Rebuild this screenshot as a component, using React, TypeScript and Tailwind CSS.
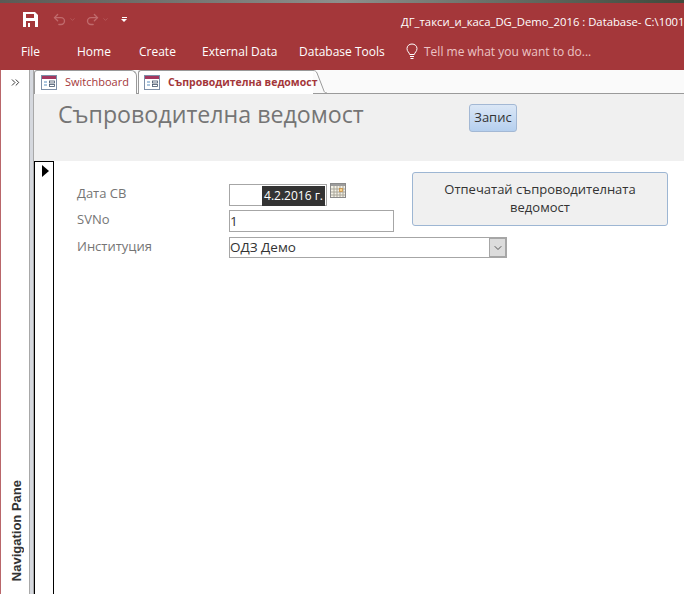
import { ChevronDown, ChevronsRight, Redo2, Undo2 } from 'lucide-react';

const font = { fontFamily: '"Open Sans", "Noto Sans", sans-serif' };

function SaveIcon() {
  return (
    <svg width="15" height="15" viewBox="0 0 15 15" className="block shrink-0">
      <path d="M0 0h12l3 3v12H0z" fill="#fff" />
      <rect x="3" y="2" width="8" height="4" fill="#a4373a" />
      <rect x="3" y="9" width="9" height="6" fill="#a4373a" />
      <rect x="5" y="11" width="2" height="4" fill="#fff" />
    </svg>
  );
}

function FormIcon() {
  return (
    <svg width="16" height="15" viewBox="0 0 16 15" className="block shrink-0">
      <rect x="0.5" y="0.5" width="15" height="14" fill="#fff" stroke="#7d8fa8" />
      <rect x="1" y="1" width="14" height="3" fill="#a4375f" />
      <path d="M3 7h3M3 10h3" stroke="#5a8fc0" strokeWidth="1" />
      <rect x="8.5" y="6" width="5" height="2" fill="#fff" stroke="#44546a" strokeWidth="0.8" />
      <rect x="8.5" y="9.5" width="5" height="2" fill="#fff" stroke="#44546a" strokeWidth="0.8" />
    </svg>
  );
}

function CalendarIcon() {
  return (
    <svg width="16" height="15" viewBox="0 0 16 15" className="block">
      <rect x="0.5" y="0.5" width="15" height="14" fill="#f4f1e6" stroke="#8a8a8a" />
      <rect x="1" y="1" width="14" height="2" fill="#9c9c9c" />
      <path d="M4 3v11M7 3v11M10 3v11M13 3v11M1 6h14M1 9h14M1 12h14" stroke="#a9a69a" strokeWidth="1" />
      <rect x="9.5" y="5.5" width="3" height="3" fill="#f7d38c" stroke="#c98b3a" strokeWidth="0.7" />
    </svg>
  );
}

function BulbIcon() {
  return (
    <svg width="12" height="17" viewBox="0 0 12 17" fill="none" stroke="#fff" strokeWidth="1" className="block shrink-0">
      <path d="M3.7 11.5C3.4 9.5 1 8.6 1 5.6 1 2.9 3.2 1 6 1s5 1.9 5 4.6c0 3-2.4 3.9-2.7 5.9z" />
      <path d="M4 13.5h4M4.5 15.5h3" />
    </svg>
  );
}

function TabEdge() {
  return (
    <svg width="14" height="24" viewBox="0 0 14 24" fill="none" className="block shrink-0">
      <path d="M0 0.5c2 0 3 .6 4 2.5l7 18c.4 1 1 2 3 2" fill="#fff" />
      <path d="M0 0.5c2 0 3 .6 4 2.5l7 18c.4 1 1 2 3 2" stroke="#9a9a9a" />
    </svg>
  );
}

export default function App() {
  return (
    <div className="w-[684px] h-[594px] overflow-hidden flex flex-col bg-white" style={font}>
      <div className="h-[3px] shrink-0 bg-gradient-to-r from-[#5b5a55] via-[#8d8f8c] to-[#3f4a3c]" />

      <div className="h-[67px] shrink-0 bg-[#a4373a] text-white flex flex-col">
        <div className="h-[32px] flex items-center pl-[23px] pr-0">
          <SaveIcon />
          <div className="flex items-center shrink-0 ml-[14px] text-[#c06a6c]">
            <Undo2 size={15} strokeWidth={2.2} className="shrink-0" />
            <ChevronDown size={7} className="ml-[2px] shrink-0" />
            <Redo2 size={15} strokeWidth={2.2} className="ml-[9px] shrink-0" />
            <ChevronDown size={7} className="ml-[2px] shrink-0" />
          </div>
          <div className="ml-[12px] shrink-0 flex flex-col items-center gap-[1px]">
            <div className="w-[5px] h-[1px] bg-white" />
            <div className="w-0 h-0 border-l-[3px] border-r-[3px] border-t-[3px] border-l-transparent border-r-transparent border-t-white" />
          </div>
          <div className="ml-[274px] mt-[6px] shrink-0 text-[11.3px] whitespace-nowrap leading-none">
            ДГ_такси_и_каса_DG_Demo_2016 : Database- C:\1001s
          </div>
        </div>
        <div className="h-[30px] flex items-center text-[12px] whitespace-nowrap pt-[3px]">
          <span className="ml-[21px] w-[56px]">File</span>
          <span className="w-[62px]">Home</span>
          <span className="w-[63px]">Create</span>
          <span className="w-[97px]">External Data</span>
          <span className="w-[107px]">Database Tools</span>
          <BulbIcon />
          <span className="ml-[6px] text-[#ecc4c5]">Tell me what you want to do...</span>
        </div>
      </div>

      <div className="flex-1 flex min-h-0">
        <div className="w-[29px] shrink-0 border-l border-l-[#b9666a] flex flex-col items-center justify-between bg-white pb-[13px]">
          <ChevronsRight size={13} strokeWidth={1.8} className="mt-[6px] text-[#333]" />
          <span
            className="ml-[2px] font-bold text-[13px] text-[#333] whitespace-nowrap leading-none"
            style={{ writingMode: 'vertical-rl', transform: 'rotate(180deg)', fontFamily: '"Liberation Sans", sans-serif' }}
          >
            Navigation Pane
          </span>
        </div>
        <div className="w-[5px] shrink-0 bg-[#d5d8de] border-x border-[#a8a8a8]" />

        <div className="flex-1 min-w-0 flex flex-col">
          <div className="h-[24px] shrink-0 flex items-end bg-[#fafafa] border-b border-[#9a9a9a]">
            <div className="h-[24px] -mb-px w-[103px] flex items-center gap-[8px] pl-[6px] border-l border-t border-r border-[#9a9a9a] rounded-tl-[3px] rounded-tr-[6px] bg-white">
              <FormIcon />
              <span className="text-[11px] text-[#a4373a]">Switchboard</span>
            </div>
            <div className="h-[24px] -mb-px flex ml-[1px] relative">
              <div className="w-[175px] flex items-center gap-[8px] pl-[5px] border-l border-t border-[#9a9a9a] rounded-tl-[3px] bg-white">
                <FormIcon />
                <span className="text-[10.5px] font-bold text-[#a4373a] whitespace-nowrap">Съпроводителна ведомост</span>
              </div>
              <TabEdge />
            </div>
          </div>

          <div className="h-[67px] shrink-0 bg-[#f0f0f0] flex items-start">
            <h1 className="ml-[24px] mt-[5px] text-[23.2px] leading-[30px] font-normal text-[#757575] whitespace-nowrap w-[411px]">
              Съпроводителна ведомост
            </h1>
            <button className="mt-[10px] w-[48px] h-[28px] border border-[#a3b8d4] rounded-[3px] bg-gradient-to-b from-[#dbe7f6] to-[#b5cfee] text-[13px] text-[#333]">
              Запис
            </button>
          </div>

          <div className="flex-1 min-h-0 flex">
            <div className="w-[20px] shrink-0 border-l border-t border-r border-black pl-[7px] pt-[3px]">
              <div className="w-0 h-0 border-t-[6px] border-b-[6px] border-l-[7px] border-t-transparent border-b-transparent border-l-black" />
            </div>
            <div className="flex-1 min-w-0 pl-[23px] pt-[11px] text-[13px]">
              <div className="flex h-[60px]">
                <div className="w-[335px] pt-[12px] flex flex-col gap-[4px]">
                  <div className="flex h-[22px]">
                    <label className="w-[152px] text-[#757575] leading-[19px]">Дата СВ</label>
                    <div className="w-[98px] h-[22px] border border-[#a6a6a6] p-px flex justify-end">
                      <span className="h-[20px] bg-[#333] text-white text-[12px] leading-[20px] px-[2px] whitespace-nowrap">4.2.2016 г.</span>
                    </div>
                    <div className="ml-[3px] -mt-px">
                      <CalendarIcon />
                    </div>
                  </div>
                  <div className="flex h-[22px]">
                    <label className="w-[152px] text-[#757575] leading-[19px]">SVNo</label>
                    <div className="w-[165px] h-[22px] border border-[#a6a6a6] text-[#333] text-[13.5px] leading-[21px]">1</div>
                  </div>
                </div>
                <button className="w-[256px] h-[54px] border border-[#9db6d3] rounded-[3px] bg-[#f0f0f0] text-[13px] leading-[18px] text-[#333] px-[20px] pb-[2px]">
                  Отпечатай съпроводителната ведомост
                </button>
              </div>
              <div className="flex mt-[5px]">
                <label className="w-[152px] text-[#757575] leading-[19px]">Институция</label>
                <div className="w-[278px] h-[21px] border border-[#a6a6a6] flex justify-between text-[#333] text-[13.5px] leading-[19px]">
                  <span>ОДЗ Демо</span>
                  <div className="w-[17px] h-[19px] bg-[#dcdcdc] border border-[#a6a6a6] flex items-center justify-center">
                    <ChevronDown size={12} className="text-[#555]" />
                  </div>
                </div>
              </div>
            </div>
          </div>
        </div>
      </div>
    </div>
  );
}
